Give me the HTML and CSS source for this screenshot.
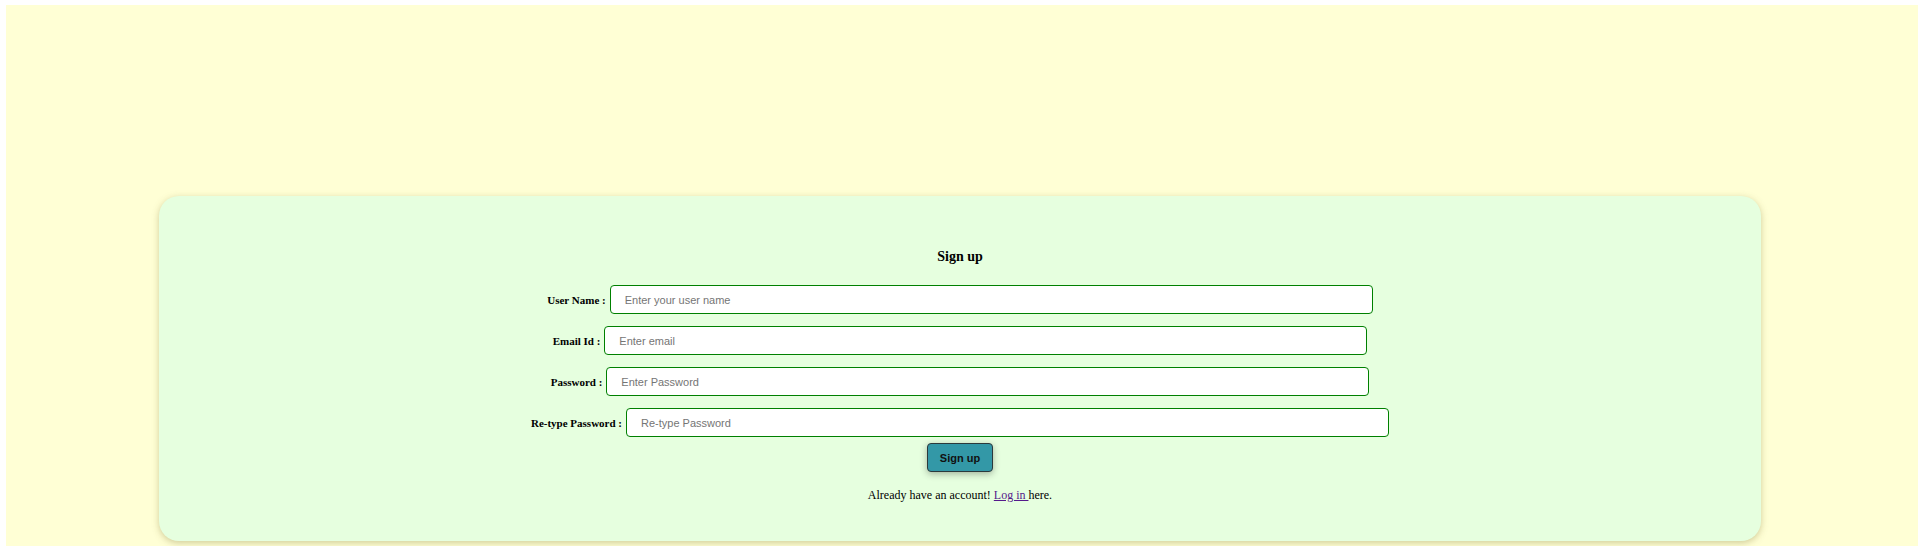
FILE: index.html
```html
<!DOCTYPE html>
<html lang="en">
<head>
<meta charset="utf-8">
<title>Sign up</title>
<link rel="stylesheet" href="styles.css">
</head>
<body>
<div class="page">
  <div class="card">
    <h3 class="title">Sign up</h3>
    <form class="form">
      <div class="row">
        <label class="label" for="u">User Name :</label>
        <input class="field" id="u" type="text" placeholder="Enter your user name">
      </div>
      <div class="row">
        <label class="label" for="e">Email Id :</label>
        <input class="field" id="e" type="email" placeholder="Enter email">
      </div>
      <div class="row">
        <label class="label" for="p">Password :</label>
        <input class="field" id="p" type="password" placeholder="Enter Password">
      </div>
      <div class="row">
        <label class="label" for="r">Re-type Password :</label>
        <input class="field" id="r" type="password" placeholder="Re-type Password">
      </div>
      <div class="actions">
        <button class="btn" type="button">Sign up</button>
      </div>
    </form>
    <p class="note">Already have an account! <a class="link" href="#">Log in </a>here.</p>
  </div>
</div>
</body>
</html>
```

FILE: styles.css
```css
html, body {
  overflow: hidden;
}
body {
  margin: 5px 0 0 6px;
  font-family: "Liberation Serif", "Times New Roman", serif;
  background: #ffffff;
}
.page {
  background: #ffffd5;
  min-height: calc(100vh - 5px);
  padding-top: 191px;
  box-sizing: border-box;
}
.card {
  margin: 0 calc(8% + 4px) 0 8%;
  background: #e6ffdf;
  border-radius: 20px;
  box-shadow: 0 2px 7px rgba(120, 110, 40, 0.35);
  padding: 53px 0 38px;
  box-sizing: border-box;
  min-height: 345px;
}
.title {
  margin: 0 0 20px;
  font-size: 14px;
  line-height: 16px;
  font-weight: bold;
  text-align: center;
  color: #000;
}
.form {
  display: flex;
  flex-direction: column;
  gap: 12px;
  margin: 0;
}
.row {
  display: flex;
  justify-content: center;
  align-items: center;
  gap: 4px;
}
.label {
  font-size: 11px;
  font-weight: bold;
  color: #000;
}
.field {
  width: 763px;
  height: 29px;
  box-sizing: border-box;
  border: 1.5px solid #008000;
  border-radius: 4px;
  background: #fff;
  padding: 0 14px;
  font-family: "Liberation Sans", Arial, sans-serif;
  font-size: 11px;
  color: #000;
  outline: none;
}
.field::placeholder {
  color: #757575;
}
.actions {
  display: flex;
  justify-content: center;
  margin-top: -6px;
}
.btn {
  height: 29px;
  padding: 0 12px;
  background: #3398a7;
  border: 1px solid #2b3a3c;
  border-radius: 4px;
  box-shadow: 0 2px 7px rgba(0, 0, 0, 0.3);
  font-family: "Liberation Sans", Arial, sans-serif;
  font-size: 11px;
  font-weight: bold;
  color: #111;
}
.note {
  margin: 16px 0 0;
  font-size: 12px;
  line-height: 14px;
  text-align: center;
  color: #000;
}
.link {
  color: #551a8b;
}
```
